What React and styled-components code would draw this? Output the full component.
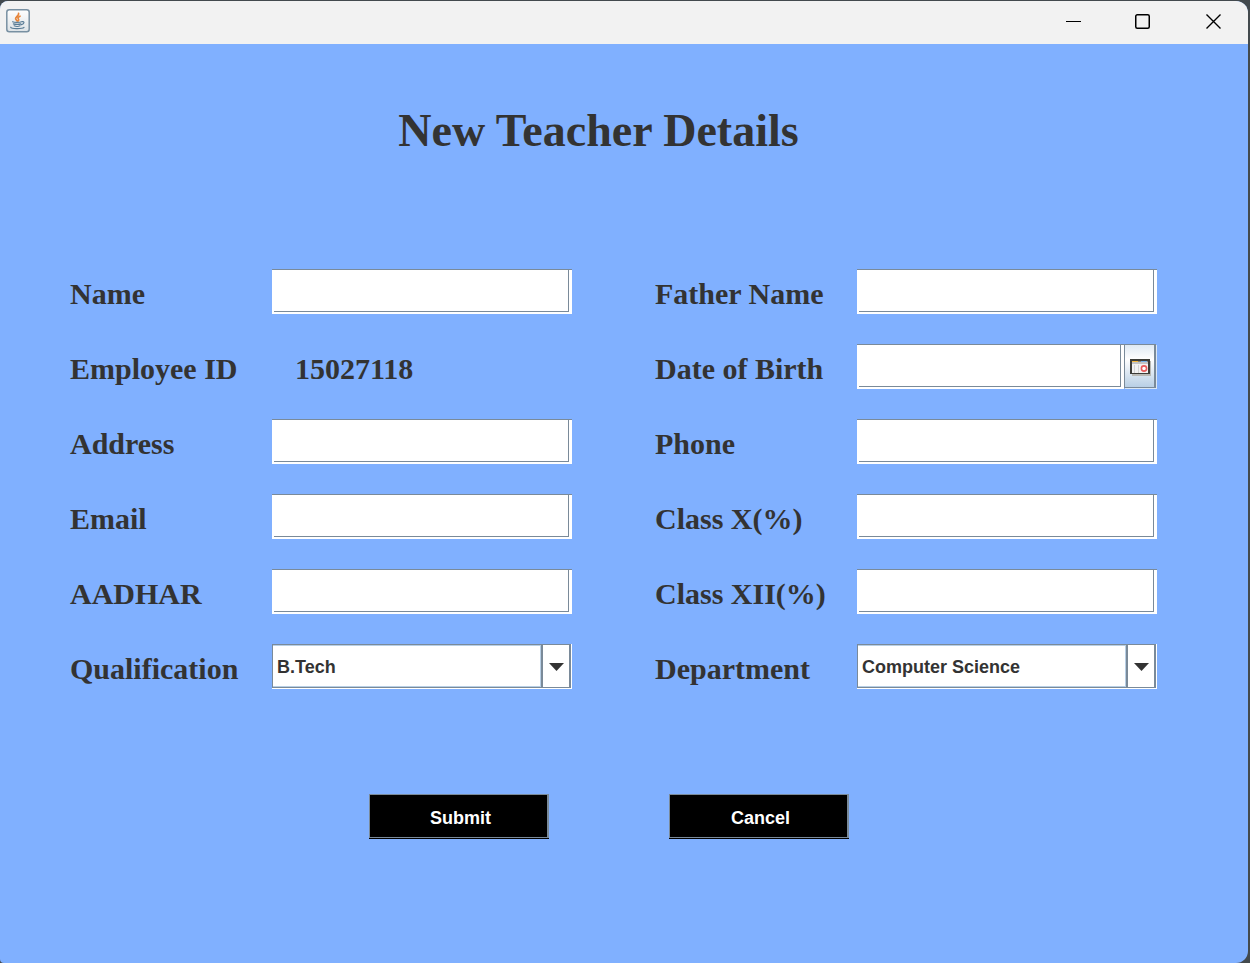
import React from "react";
import styled, { createGlobalStyle } from "styled-components";

const GlobalStyle = createGlobalStyle`
  *, *::before, *::after { box-sizing: border-box; }
  html, body { margin: 0; background: #434a4e; }
  #root { min-height: 100vh; display: flex; }
`;

const serif = `"Liberation Serif", "Times New Roman", serif`;
const sans = `"Liberation Sans", Arial, sans-serif`;
const steel = "#7a8a99";

const Frame = styled.div`
  flex: 1;
  display: flex;
  flex-direction: column;
  margin: 1px 2px 0 0;
  border-radius: 8px 12px 12px 4px;
  overflow: hidden;
  background: #80b0ff;
  color: #333;
`;

const TitleBar = styled.header`
  display: flex;
  justify-content: space-between;
  height: 43px;
  background: #f2f2f2;
`;

const AppIcon = styled.svg`
  width: 24px;
  height: 24px;
  margin: 8px 6px;
`;

const WindowControls = styled.div`
  display: flex;
`;

const ControlButton = styled.button`
  display: flex;
  align-items: center;
  justify-content: center;
  width: 70px;
  padding: 0 0 3px;
  border: 0;
  background: transparent;
`;

const Content = styled.main`
  display: flex;
  flex-direction: column;
  padding: 61px 91px 60px 70px;
`;

const Title = styled.h1`
  margin: 0 30px 0 0;
  font: bold 46px/52px ${serif};
  text-align: center;
`;

const FieldGrid = styled.div`
  display: grid;
  grid-template-columns: 1fr 1fr;
  gap: 30px 83px;
  margin-top: 112px;
`;

const Field = styled.div`
  display: grid;
  grid-template-columns: 202px minmax(0, 1fr);
  grid-template-rows: 45px;
`;

const Label = styled.label`
  padding-top: 4px;
  font: bold 30px/42px ${serif};
  white-space: nowrap;
`;

const ReadOnly = styled.output`
  padding: 4px 0 0 23px;
  font: bold 30px/42px ${serif};
`;

const TextFrame = styled.div`
  flex: 1;
  display: flex;
  min-width: 0;
  padding: 0 3px 2px 2px;
  border-top: 1px solid ${steel};
  background: #fff;
`;

const TextInput = styled.input`
  flex: 1;
  min-width: 0;
  padding: 0 4px;
  border: 0 solid ${steel};
  border-width: 0 1px 1px 0;
  border-radius: 0;
  outline: 0;
  background: #fff;
  color: #333;
  font: 18px ${sans};
`;

const DateGroup = styled.div`
  display: flex;
  padding-right: 1px;
`;

const DateButton = styled.button`
  display: flex;
  align-items: center;
  justify-content: center;
  width: 32px;
  height: 44px;
  padding: 3px 0 0 2px;
  border: solid ${steel};
  border-width: 1px 2px 1px 1px;
  border-radius: 0;
  background: linear-gradient(#dfe9f3, #fff 34%, #b8cfe5);
  box-shadow: 1px 1px #dbe7f5;
`;

const SelectFrame = styled.div`
  display: grid;
  grid-template-columns: minmax(0, 1fr) 30px;
  border: 0 solid #fff;
  border-width: 0 1px 1px 0;
`;

const Select = styled.select`
  grid-area: 1 / 1 / 2 / 3;
  min-width: 0;
  padding: 2px 36px 0 4px;
  appearance: none;
  border: solid ${steel};
  border-width: 1px 2px 1px 1px;
  border-radius: 0;
  outline: 0;
  background: #fff;
  box-shadow: inset 0 1px #b8cfe5, inset 0 -1px #b8cfe5;
  color: #333;
  font: bold 18px ${sans};
`;

const SelectArrow = styled.span`
  grid-area: 1 / 2;
  display: flex;
  align-items: center;
  justify-content: center;
  margin: 1px 2px 1px 0;
  padding-top: 2px;
  border-left: 2px solid ${steel};
  background: #fff;
  box-shadow: -1px 0 #b8cfe5;
  pointer-events: none;
`;

const Actions = styled.div`
  display: flex;
  justify-content: center;
  gap: 120px;
  margin: 105px 9px 0 0;
`;

const ActionButton = styled.button`
  width: 180px;
  height: 44px;
  padding: 4px 0 0 4px;
  border: solid ${steel};
  border-width: 1px 2px 1px 1px;
  border-radius: 0;
  background: #000;
  box-shadow: 0 1px #000;
  color: #fff;
  font: bold 18px ${sans};
`;

const JavaIcon = () => (
  <AppIcon viewBox="0 0 24 24" aria-hidden="true">
    <defs>
      <linearGradient id="tile" x1="0" y1="0" x2="0" y2="1">
        <stop offset="0" stopColor="#fff" />
        <stop offset="1" stopColor="#dce2e6" />
      </linearGradient>
    </defs>
    <rect x="0.8" y="0.8" width="22.4" height="22" rx="2.5" fill="url(#tile)" stroke="#7890a2" strokeWidth="1.5" />
    <g fill="none" strokeLinecap="round">
      <path d="M12.6 4.4c.6 2.6-3.4 3.4-3 5.4.2 1 1.3 1.4 1.6 2.2M14 7.2c-2 1-2.4 2-1.6 2.8.6.6.3 1.3-.2 1.8" stroke="#e7863c" strokeWidth="1.7" />
      <path d="M6.6 12.8c1.5.8 7 .8 9 0M7.4 14.9c1.7.7 5.8.7 7.4 0M8.2 16.8c1.5.7 4.4.7 5.9 0M16 12.6c2.8-.5 2.5 2.5-.5 3M4.8 18.2c-.6 1.8 11.4 2 13.2.2" stroke="#587b95" strokeWidth="1.2" />
    </g>
  </AppIcon>
);

const CalendarIcon = () => (
  <svg width="22" height="18" viewBox="0 0 22 18" aria-hidden="true">
    <path d="M2 2h19v15H2z" fill="#b9b9b5" />
    <path d="M0 0h20v15H0z" fill="#3d3d38" />
    <path d="M2 3h16v11H2z" fill="#f2f2f2" />
    <path d="M2 2h6v1H2z" fill="#f5b83d" />
    <path d="M8 2h3v1H8zM17 2h1v1h-1z" fill="#8d8872" />
    <path d="M11 2h6v1h-6z" fill="#75b2e8" />
    <path d="M2 3h16v2H2z" fill="#c4c4c4" />
    <path d="M4 6h1v8H4zM8 6h1v8H8z" fill="#d3d3d3" />
    <circle cx="14" cy="9.5" r="2.6" fill="#fff" stroke="#e85b5b" strokeWidth="1.6" />
  </svg>
);

const TextField = ({ id, label }) => (
  <Field>
    <Label htmlFor={id}>{label}</Label>
    <TextFrame>
      <TextInput id={id} name={id} type="text" />
    </TextFrame>
  </Field>
);

const SelectField = ({ id, label, options }) => (
  <Field>
    <Label htmlFor={id}>{label}</Label>
    <SelectFrame>
      <Select id={id} name={id}>
        {options.map((option) => (
          <option key={option}>{option}</option>
        ))}
      </Select>
      <SelectArrow>
        <svg width="15" height="8" viewBox="0 0 15 8" aria-hidden="true">
          <path d="M0 0h15L7.5 8z" fill="#333" />
        </svg>
      </SelectArrow>
    </SelectFrame>
  </Field>
);

export default function App() {
  return (
    <>
      <GlobalStyle />
      <Frame>
        <TitleBar>
          <JavaIcon />
          <WindowControls>
            <ControlButton type="button" aria-label="Minimize">
              <svg width="16" height="16" viewBox="0 0 16 16">
                <path d="M1 8.5h15" stroke="#000" />
              </svg>
            </ControlButton>
            <ControlButton type="button" aria-label="Maximize">
              <svg width="16" height="16" viewBox="0 0 16 16">
                <rect x="0.75" y="1.75" width="13.5" height="13.5" rx="1.5" fill="none" stroke="#000" strokeWidth="1.5" />
              </svg>
            </ControlButton>
            <ControlButton type="button" aria-label="Close">
              <svg width="16" height="16" viewBox="0 0 16 16">
                <path d="M1.5 1.5l14 14M15.5 1.5l-14 14" stroke="#000" strokeWidth="1.4" />
              </svg>
            </ControlButton>
          </WindowControls>
        </TitleBar>
        <Content>
          <Title>New Teacher Details</Title>
          <form onSubmit={(event) => event.preventDefault()}>
            <FieldGrid>
              <TextField id="name" label="Name" />
              <TextField id="father-name" label="Father Name" />
              <Field>
                <Label htmlFor="employee-id">Employee ID</Label>
                <ReadOnly id="employee-id">15027118</ReadOnly>
              </Field>
              <Field>
                <Label htmlFor="birth-date">Date of Birth</Label>
                <DateGroup>
                  <TextFrame>
                    <TextInput id="birth-date" name="birth-date" type="text" />
                  </TextFrame>
                  <DateButton type="button" aria-label="Choose date">
                    <CalendarIcon />
                  </DateButton>
                </DateGroup>
              </Field>
              <TextField id="address" label="Address" />
              <TextField id="phone" label="Phone" />
              <TextField id="email" label="Email" />
              <TextField id="class-x" label="Class X(%)" />
              <TextField id="aadhar" label="AADHAR" />
              <TextField id="class-xii" label="Class XII(%)" />
              <SelectField id="qualification" label="Qualification" options={["B.Tech"]} />
              <SelectField id="department" label="Department" options={["Computer Science"]} />
            </FieldGrid>
            <Actions>
              <ActionButton type="submit">Submit</ActionButton>
              <ActionButton type="button">Cancel</ActionButton>
            </Actions>
          </form>
        </Content>
      </Frame>
    </>
  );
}
